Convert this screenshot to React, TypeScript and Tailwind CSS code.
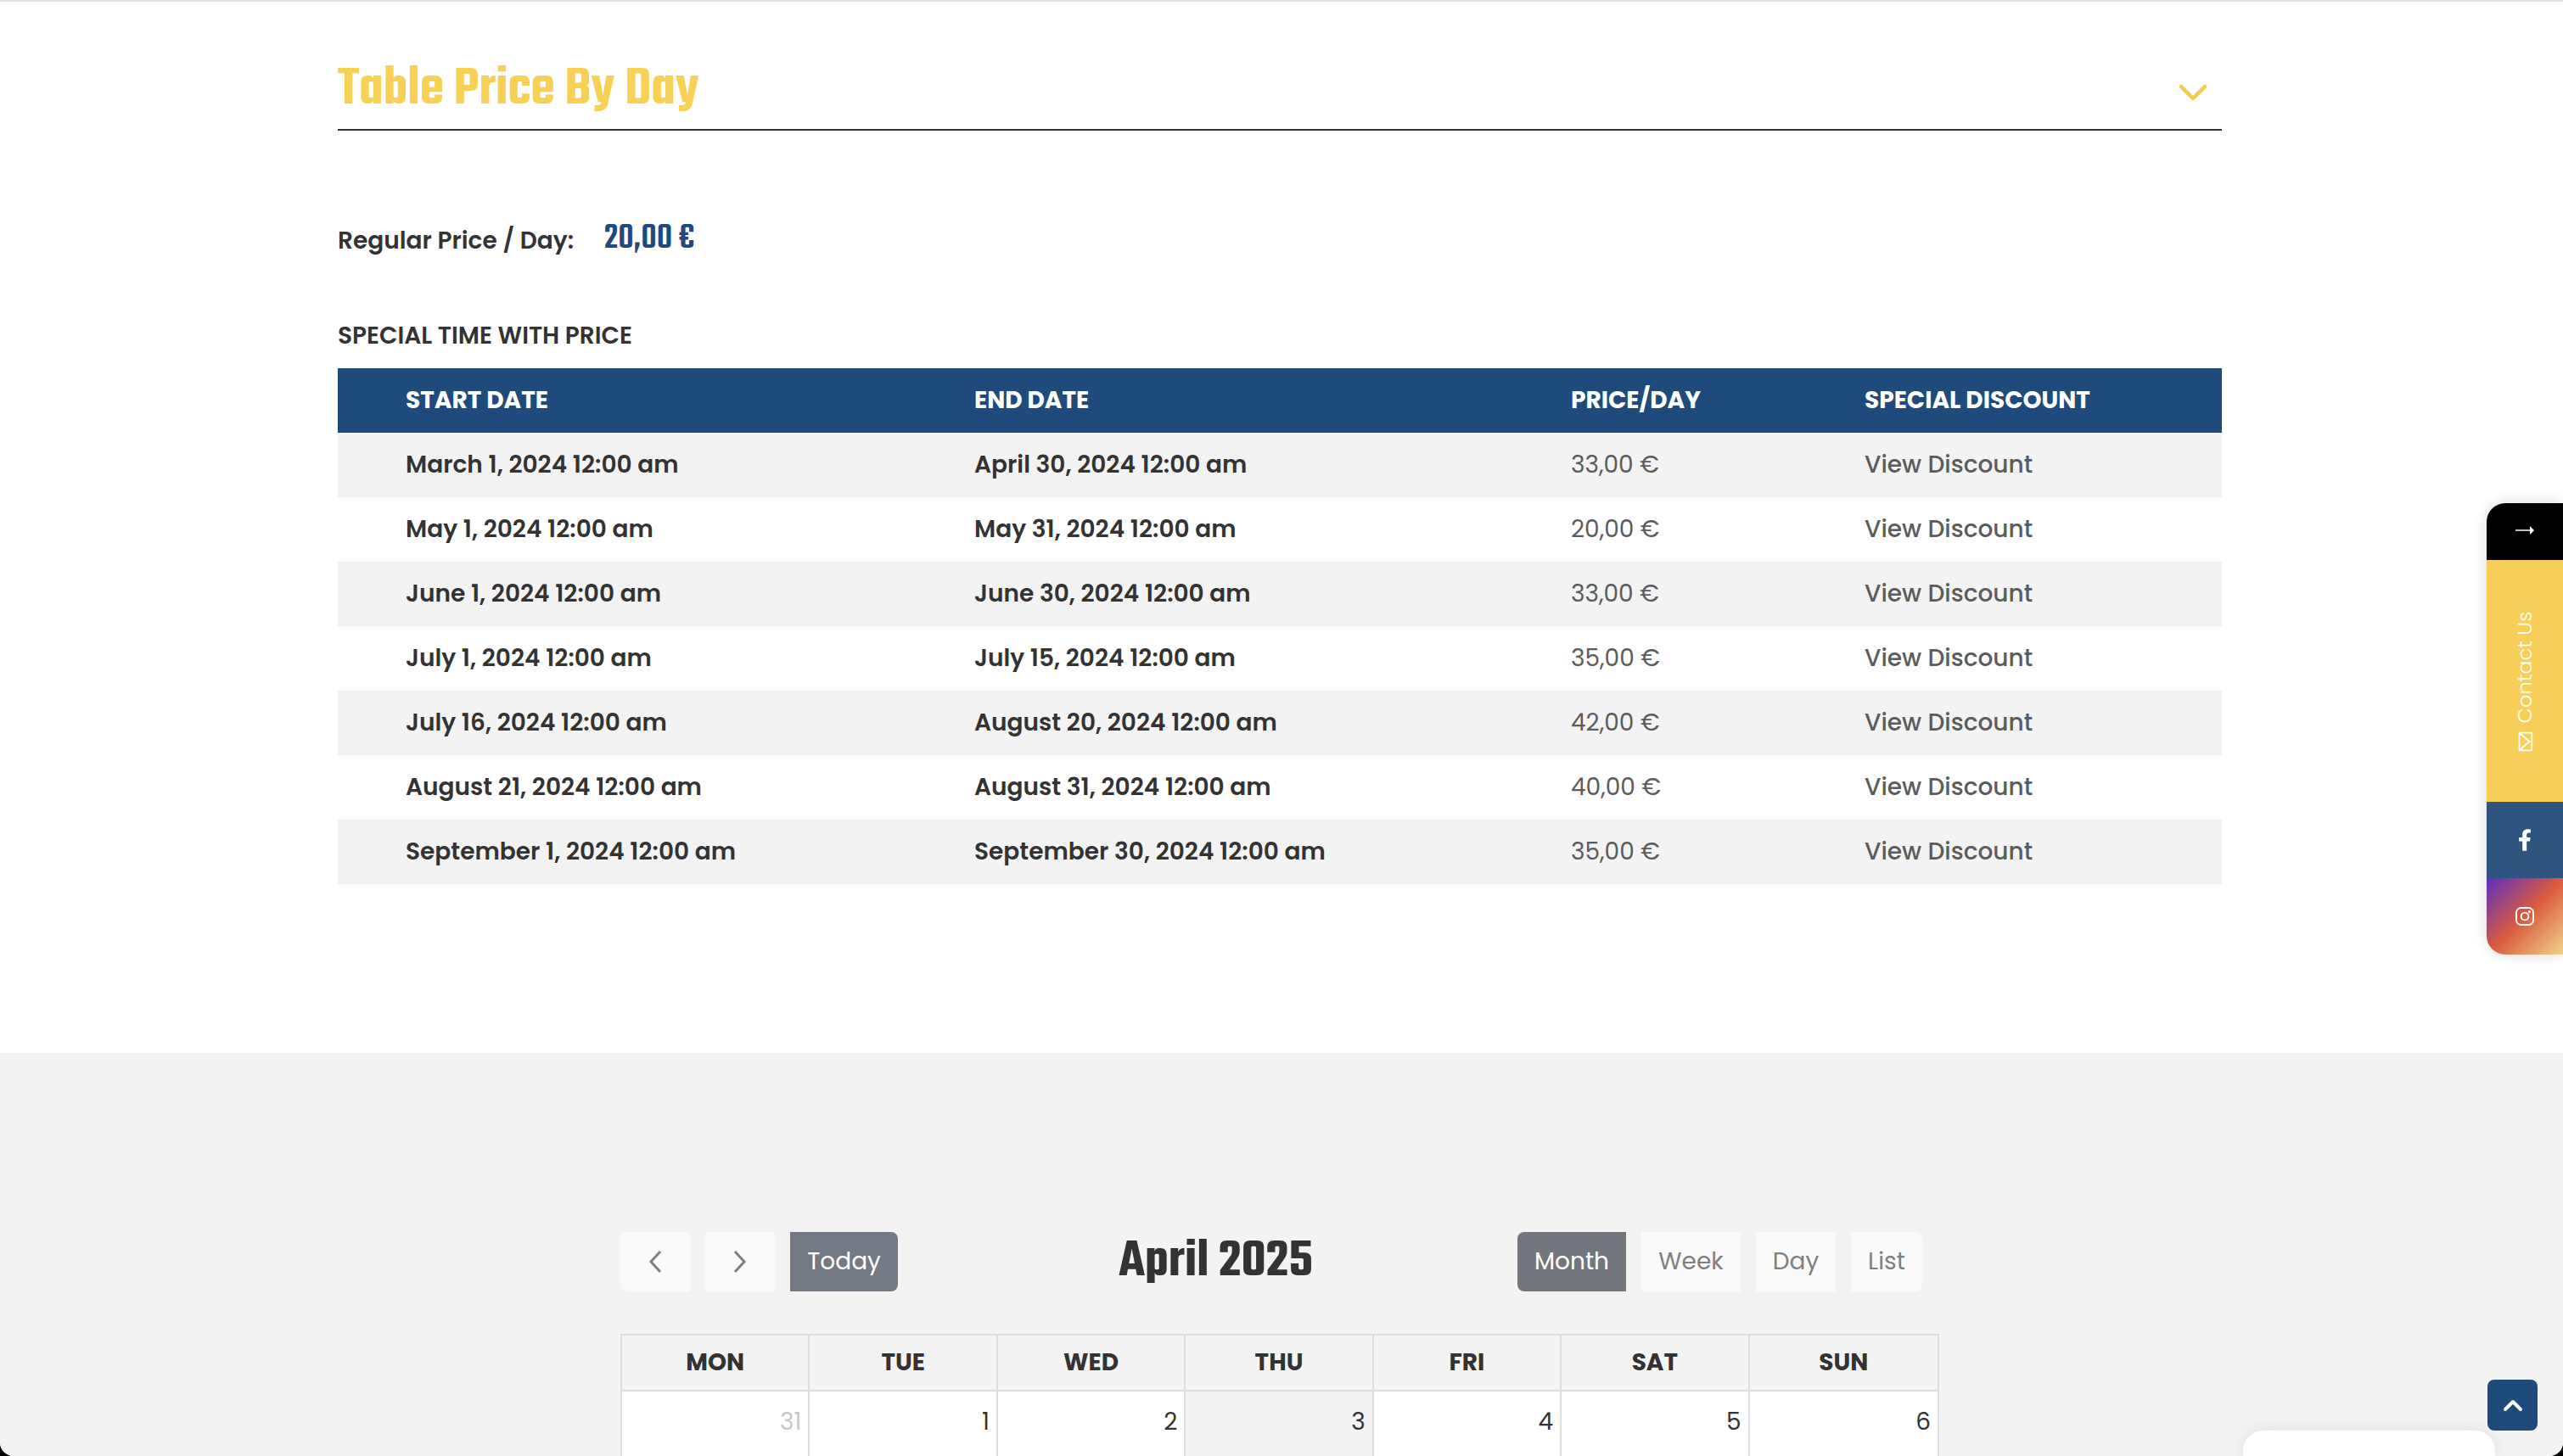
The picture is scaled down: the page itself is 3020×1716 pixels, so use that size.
import React from "react";

const sans = "font-['Poppins','Noto_Sans','Liberation_Sans',sans-serif]";
const narrow = "font-['Teko','Oswald','Bebas_Neue','Liberation_Sans',sans-serif]";

const rows = [
  ["March 1, 2024 12:00 am", "April 30, 2024 12:00 am", "33,00 €"],
  ["May 1, 2024 12:00 am", "May 31, 2024 12:00 am", "20,00 €"],
  ["June 1, 2024 12:00 am", "June 30, 2024 12:00 am", "33,00 €"],
  ["July 1, 2024 12:00 am", "July 15, 2024 12:00 am", "35,00 €"],
  ["July 16, 2024 12:00 am", "August 20, 2024 12:00 am", "42,00 €"],
  ["August 21, 2024 12:00 am", "August 31, 2024 12:00 am", "40,00 €"],
  ["September 1, 2024 12:00 am", "September 30, 2024 12:00 am", "35,00 €"],
];
const days = ["MON", "TUE", "WED", "THU", "FRI", "SAT", "SUN"];
const nums = ["31", "1", "2", "3", "4", "5", "6"];

export default function App() {
  return (
    <div className="h-[1716px] w-[3020px] overflow-hidden bg-black">
      <div className={`${sans} relative h-[1716px] w-[3020px] overflow-hidden rounded-b-[16px] bg-white text-[#333333]`}>
        <div className="h-[2px] bg-[#e2e2e2]" />
        <div className="ml-[398px] flex h-[152px] w-[2220px] items-end justify-between border-b-2 border-[#333333] pb-[8px]">
          <div className={`${narrow} text-[65.5px] font-semibold leading-[76px] text-[#f7d056]`}>Table Price By Day</div>
          <svg className="mr-[17px] mb-[25px]" width="34" height="20" viewBox="0 0 34 20" fill="none" stroke="#f7c94f" strokeWidth="4.5" strokeLinecap="round" strokeLinejoin="round">
            <path d="M3 3 L17 17 L31 3" />
          </svg>
        </div>
        <div className="ml-[398px] mt-[108px] flex items-center">
          <span className="text-[28px] font-semibold leading-[44px]">Regular Price / Day:</span>
          <span className={`${narrow} ml-[36px] -mt-[4px] text-[44px] font-medium leading-[44px] text-[#1f4a7c]`}>20,00 €</span>
        </div>
        <div className="ml-[398px] mt-[70px] text-[28px] font-semibold leading-[40px]">SPECIAL TIME WITH PRICE</div>
        <div className="ml-[398px] mt-[18px] w-[2220px]">
          <div className="grid h-[76px] grid-cols-[670px_703px_346px_1fr] items-center bg-[#1f4a7c] pl-[80px] text-[28px] font-bold text-white">
            <div>START DATE</div>
            <div>END DATE</div>
            <div>PRICE/DAY</div>
            <div>SPECIAL DISCOUNT</div>
          </div>
          {rows.map((r, i) => (
            <div key={i} className={`grid h-[76px] grid-cols-[670px_703px_346px_1fr] items-center pl-[80px] text-[28px] ${i % 2 === 0 ? "bg-[#f3f3f3]" : "bg-white"}`}>
              <div className="font-semibold">{r[0]}</div>
              <div className="font-semibold">{r[1]}</div>
              <div className="text-[#5c5c5c]">{r[2]}</div>
              <div className="font-medium text-[#5c5c5c]">View Discount</div>
            </div>
          ))}
        </div>
        <div className="mt-[199px] h-[600px] bg-[#f3f3f3] pt-[211px]">
          <div className="ml-[731px] flex h-[70px] w-[1553px]">
            <button className="flex h-[70px] w-[82px] items-center justify-center rounded-l-[8px] bg-[#fafafa]">
              <svg width="18" height="28" viewBox="0 0 18 28" fill="none" stroke="#808080" strokeWidth="3"><path d="M15 2 L4 14 L15 26" /></svg>
            </button>
            <button className="ml-[18px] flex h-[70px] w-[82px] items-center justify-center bg-[#fafafa]">
              <svg width="18" height="28" viewBox="0 0 18 28" fill="none" stroke="#808080" strokeWidth="3"><path d="M3 2 L14 14 L3 26" /></svg>
            </button>
            <button className="ml-[18px] h-[70px] w-[127px] rounded-r-[8px] bg-[#737a85] text-[28px] text-white">Today</button>
            <div className={`${narrow} ml-[260px] w-[229px] whitespace-nowrap text-center text-[64px] font-semibold leading-[72px]`}>April 2025</div>
            <button className="ml-[241px] h-[70px] w-[128px] rounded-l-[8px] bg-[#72767d] text-[28px] text-white">Month</button>
            <button className="ml-[18px] h-[70px] w-[117px] bg-[#fafafa] text-[28px] text-[#808080]">Week</button>
            <button className="ml-[18px] h-[70px] w-[94px] bg-[#fafafa] text-[28px] text-[#808080]">Day</button>
            <button className="ml-[18px] h-[70px] w-[84px] rounded-r-[8px] bg-[#fafafa] text-[28px] text-[#808080]">List</button>
          </div>
          <div className="ml-[731px] mt-[50px] w-[1554px] border-x-2 border-t-2 border-[#dddddd]">
            <div className="grid h-[66px] grid-cols-7 border-b-2 border-[#dddddd]">
              {days.map((d, i) => (
                <div key={d} className={`flex items-center justify-center text-[28px] font-bold ${i < 6 ? "border-r-2 border-[#dddddd]" : ""}`}>{d}</div>
              ))}
            </div>
            <div className="grid h-[200px] grid-cols-7">
              {nums.map((n, i) => (
                <div key={n} className={`pr-[8px] pt-[16px] text-right text-[28px] leading-[40px] ${i === 3 ? "bg-[#f3f3f3]" : "bg-white"} ${i === 0 ? "text-[#c8c8c8]" : ""} ${i < 6 ? "border-r-2 border-[#dddddd]" : ""}`}>{n}</div>
              ))}
            </div>
          </div>
        </div>
        <div className="absolute left-[2930px] top-[593px] flex h-[532px] w-[90px] flex-col overflow-hidden rounded-l-[22px] shadow-[0_0_16px_rgba(0,0,0,0.15)]">
          <div className="flex h-[67px] items-center justify-center bg-black pb-[4px] text-white">
            <svg width="22" height="12" viewBox="0 0 22 12" fill="white"><path d="M0 5.2h17V1l5 5-5 5V6.8H0z" /></svg>
          </div>
          <div className="flex h-[285px] items-center justify-center bg-[#f6ce58] text-white">
            <div className="flex -rotate-90 items-center gap-[10px] whitespace-nowrap text-[24px] font-light">
              <svg width="23" height="17" viewBox="0 0 23 17" fill="none" stroke="white" strokeWidth="2"><rect x="1" y="1" width="21" height="15" rx="1.5" /><path d="M1 1 L11.5 13 L22 1" /></svg>
              Contact Us
            </div>
          </div>
          <div className="flex h-[90px] items-center justify-center bg-[#2f5480]">
            <svg width="16" height="26" viewBox="0 0 320 512" fill="white"><path d="M279.14 288l14.22-92.66h-88.91v-60.13c0-25.35 12.42-50.06 52.24-50.06h40.42V6.26S260.43 0 225.36 0c-73.22 0-121.08 44.38-121.08 124.72v70.62H22.89V288h81.39v224h100.17V288z" /></svg>
          </div>
          <div className="flex h-[90px] items-center justify-center bg-[linear-gradient(135deg,#5c2fc2_0%,#da5a3e_50%,#f0d38a_100%)]">
            <svg width="22" height="22" viewBox="0 0 22 22" fill="none" stroke="white" strokeWidth="1.8"><rect x="1" y="1" width="20" height="20" rx="5.5" /><circle cx="11" cy="11" r="4.4" /><circle cx="16.4" cy="5.6" r="0.7" fill="white" /></svg>
          </div>
        </div>
        <div className="absolute left-[2931px] top-[1626px] flex h-[60px] w-[59px] items-center justify-center rounded-[8px] bg-[#1f4a7c]">
          <svg width="24" height="16" viewBox="0 0 24 16" fill="none" stroke="white" strokeWidth="4" strokeLinecap="round" strokeLinejoin="round"><path d="M3 13 L12 4 L21 13" /></svg>
        </div>
        <div className="absolute left-[2643px] top-[1686px] h-[30px] w-[297px] rounded-t-[24px] bg-white shadow-[0_0_20px_rgba(0,0,0,0.08)]" />
      </div>
    </div>
  );
}
